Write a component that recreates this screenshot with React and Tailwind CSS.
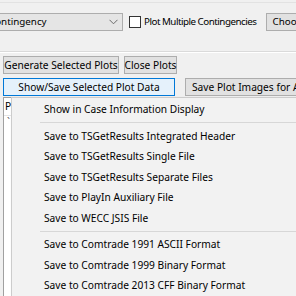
import React from "react";

function Chevron() {
  return (
    <svg width="9" height="6" viewBox="0 0 9 6" className="shrink-0">
      <path d="M0.5 0.8 L4.5 4.8 L8.5 0.8" fill="none" stroke="#6b6b6b" strokeWidth="1" />
    </svg>
  );
}

function MenuItem({ children }) {
  return (
    <div className="h-[20.5px] flex items-center pl-[32px] whitespace-nowrap">{children}</div>
  );
}

function Sep() {
  return (
    <div className="h-[6px] flex items-center pl-[28px]">
      <div className="h-px w-full bg-[#d7d7d7]" />
    </div>
  );
}

export default function App() {
  return (
    <div className="w-[296px] h-[296px] overflow-hidden bg-[#f0f0f0] relative text-[10.2px] leading-none text-black font-['Noto_Sans',sans-serif]">
      <div className="h-[3px] border-b border-[#e2e2e2]" />
      {/* Row 1 */}
      <div className="flex items-center mt-[10px] h-[18px] whitespace-nowrap text-[9.8px]">
        <div className="-ml-[13px] w-[136px] h-[18px] shrink-0 bg-[#e5e5e5] border border-[#adadad] flex items-center justify-between pl-[1px] pr-[4px]">
          <span>Contingency</span>
          <Chevron />
        </div>
        <div className="ml-[6px] w-[12px] h-[12px] shrink-0 bg-white border border-[#333333]" />
        <span className="ml-[3px] shrink-0 tracking-[-0.5px]">Plot Multiple Contingencies</span>
        <div className="ml-[10px] h-[18px] shrink-0 bg-[#e1e1e1] border border-[#adadad] flex items-center px-[5px]">
          Choose...
        </div>
      </div>
      {/* separator */}
      <div className="mt-[20px] h-px bg-[#dadada]" />
      <div className="h-px bg-white" />
      {/* Row 2 */}
      <div className="flex mt-[3px] pl-[3px] gap-[5px] whitespace-nowrap">
        <div className="w-[116px] h-[18px] bg-[#e1e1e1] border border-[#adadad] flex items-center justify-center">
          Generate Selected Plots
        </div>
        <div className="w-[53px] h-[18px] bg-[#e1e1e1] border border-[#adadad] flex items-center justify-center">
          Close Plots
        </div>
      </div>
      {/* Row 3 */}
      <div className="flex mt-[4px] pl-[3px] gap-[10px] whitespace-nowrap">
        <div className="w-[172px] h-[18px] shrink-0 bg-[#e5f1fb] border border-[#0078d7] flex items-center justify-center">
          Show/Save Selected Plot Data
        </div>
        <div className="w-[150px] h-[18px] shrink-0 bg-[#e1e1e1] border border-[#adadad] flex items-center px-[6px]">
          Save Plot Images for Auxiliary
        </div>
      </div>
      {/* Panel behind menu */}
      <div className="ml-[3px] mt-[1px] h-[200px] border-l border-t border-[#a0a0a0] bg-white">
        <div className="h-[18px] flex items-center pl-[1px] border-b border-[#e5e5e5]">P</div>
        <div className="pl-[3px] pt-[1px] text-[#555555]">ˋ</div>
      </div>
      {/* Context menu */}
      <div className="absolute left-[11px] top-[97px] w-[300px] bg-[#f2f2f2] border border-[#cccccc] pt-[1px] pb-0 shadow-[2px_2px_3px_rgba(0,0,0,0.2)]">
        <MenuItem>Show in Case Information Display</MenuItem>
        <Sep />
        <MenuItem>Save to TSGetResults Integrated Header</MenuItem>
        <MenuItem>Save to TSGetResults Single File</MenuItem>
        <MenuItem>Save to TSGetResults Separate Files</MenuItem>
        <MenuItem>Save to PlayIn Auxiliary File</MenuItem>
        <MenuItem>Save to WECC JSIS File</MenuItem>
        <Sep />
        <MenuItem>Save to Comtrade 1991 ASCII Format</MenuItem>
        <MenuItem>Save to Comtrade 1999 Binary Format</MenuItem>
        <MenuItem>Save to Comtrade 2013 CFF Binary Format</MenuItem>
      </div>
    </div>
  );
}
